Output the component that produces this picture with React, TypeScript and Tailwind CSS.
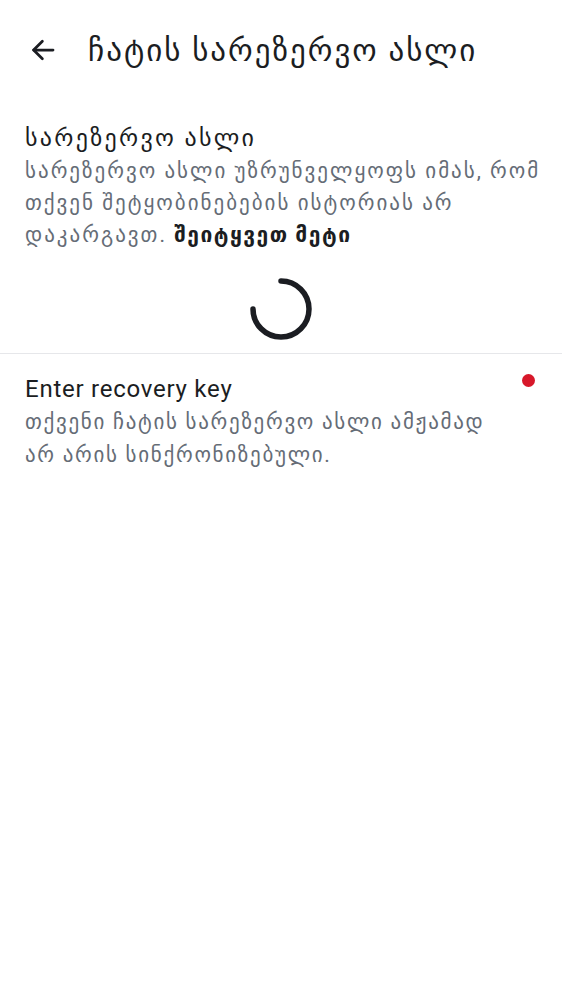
export default function App() {
  return (
    <div className="min-h-[1000px] w-full bg-white font-['Roboto','DejaVu_Sans',sans-serif] text-[#1b1d22]">
      <header className="flex h-[100px] items-center px-[28px]">
        <svg width="30" height="30" viewBox="0 0 24 24" fill="none" stroke="#1b1d22" strokeWidth="2.2" strokeLinecap="round" strokeLinejoin="round">
          <path d="M20 12H4.5" />
          <path d="M11.5 19L4.5 12l7-7" />
        </svg>
        <h1 className="ml-[30px] text-[31px] leading-none tracking-[2px]">ჩატის სარეზერვო ასლი</h1>
      </header>

      <section className="pl-[25px] pr-[16px] pt-[21px]">
        <h2 className="text-[24px] leading-[34px] tracking-[2.3px]">სარეზერვო ასლი</h2>
        <p className="text-[21px] leading-[32px] tracking-[2px] text-[#656c76]">
          სარეზერვო ასლი უზრუნველყოფს იმას, რომ თქვენ შეტყობინებების ისტორიას არ დაკარგავთ.{" "}
          <span className="font-bold tracking-[1.5px] text-[#1b1d22]">შეიტყვეთ მეტი</span>
        </p>
      </section>

      <div className="flex justify-center pt-[25px] pb-[11px]">
        <svg width="66" height="66" viewBox="0 0 66 66" fill="none">
          <path d="M33 5 A28 28 0 1 1 5 33" stroke="#1b1d22" strokeWidth="5.5" strokeLinecap="round" />
        </svg>
      </div>

      <div className="h-px bg-[#e6e7ea]" />

      <div className="relative pl-[25px] pr-[50px] pt-[18px]">
        <h2 className="text-[24px] leading-[34px] tracking-[0.75px]">Enter recovery key</h2>
        <p className="text-[21px] leading-[33px] tracking-[1.7px] text-[#656c76]">
          თქვენი ჩატის სარეზერვო ასლი ამჟამად არ არის სინქრონიზებული.
        </p>
        <span className="absolute right-[27px] top-[20px] h-[13px] w-[13px] rounded-full bg-[#d7182a]" />
      </div>
    </div>
  );
}
